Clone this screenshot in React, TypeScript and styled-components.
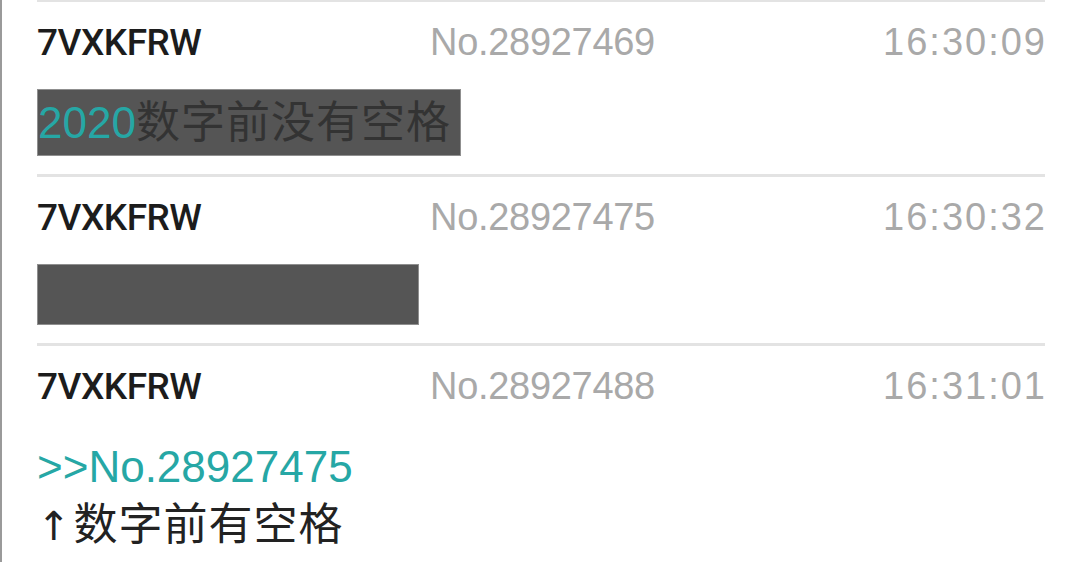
import React from "react";
import styled, { createGlobalStyle } from "styled-components";

const GlobalStyle = createGlobalStyle`
  html, body {
    margin: 0;
    padding: 0;
    background: #ffffff;
  }
  body {
    font-family: "Liberation Sans", "Noto Sans CJK SC", sans-serif;
    overflow: hidden;
  }
`;

type Segment = { text: string; link?: boolean; symbol?: boolean };

type PostData = {
  id: string;
  user: string;
  no: string;
  time: string;
  spoiler?: { segments: Segment[]; width?: number };
  lines?: Segment[][];
};

const posts: PostData[] = [
  {
    id: "1",
    user: "7VXKFRW",
    no: "No.28927469",
    time: "16:30:09",
    spoiler: {
      segments: [{ text: "2020", link: true }, { text: "数字前没有空格" }],
    },
  },
  {
    id: "2",
    user: "7VXKFRW",
    no: "No.28927475",
    time: "16:30:32",
    spoiler: { segments: [], width: 382 },
  },
  {
    id: "3",
    user: "7VXKFRW",
    no: "No.28927488",
    time: "16:31:01",
    lines: [
      [{ text: ">>No.28927475", link: true }],
      [{ text: "↑", symbol: true }, { text: "数字前有空格" }],
    ],
  },
];

const Page = styled.div`
  min-height: 100vh;
  box-sizing: border-box;
  border-left: 2px solid #9a9a9a;
  padding: 0 35px 0 35px;
  margin-top: -1px;
`;

const Post = styled.article`
  border-top: 3px solid #e3e3e3;
  padding-bottom: 18px;
`;

const Header = styled.header`
  display: grid;
  grid-template-columns: 393px 1fr auto;
  align-items: baseline;
  padding-top: 18px;
  height: 44px;
  line-height: 44px;
  font-size: 38px;
`;

const User = styled.span`
  font-family: "Roboto", "Liberation Sans", sans-serif;
  font-weight: 500;
  font-size: 37px;
  color: #1c1c1c;
  letter-spacing: -0.5px;
`;

const PostNo = styled.span`
  color: #a9a9a9;
  letter-spacing: -0.3px;
`;

const Time = styled.span`
  color: #a9a9a9;
  letter-spacing: 2px;
  margin-right: -2px;
`;

const Spoiler = styled.div<{ $width?: number }>`
  margin-top: 25px;
  box-sizing: border-box;
  width: ${(p) => (p.$width ? `${p.$width}px` : "fit-content")};
  min-height: 61px;
  padding-right: 9px;
  background: #555555;
  border: 1px solid #8f8f8f;
  font-size: 44px;
  line-height: 65px;
  color: #333333;
`;

const Body = styled.div`
  margin-top: 30px;
  font-size: 44px;
  color: #222222;
`;

const Line = styled.div`
  line-height: 58px;
`;

const Seg = styled.span<{ $link?: boolean; $symbol?: boolean }>`
  color: ${(p) => (p.$link ? "#26a7a5" : "inherit")};
  letter-spacing: ${(p) => (p.$link ? "0" : "1px")};
  font-family: ${(p) =>
    p.$symbol ? `"DejaVu Sans", sans-serif` : "inherit"};
  font-size: ${(p) => (p.$symbol ? "40px" : "inherit")};
  margin-right: ${(p) => (p.$symbol ? "2px" : "0")};
`;

const renderSegments = (segments: Segment[]) =>
  segments.map((s, i) => (
    <Seg key={i} $link={s.link} $symbol={s.symbol}>
      {s.text}
    </Seg>
  ));

const App = () => {
  return (
    <>
      <GlobalStyle />
      <Page>
        {posts.map((post) => (
          <Post key={post.id}>
            <Header>
              <User>{post.user}</User>
              <PostNo>{post.no}</PostNo>
              <Time>{post.time}</Time>
            </Header>
            {post.spoiler && (
              <Spoiler $width={post.spoiler.width}>
                {renderSegments(post.spoiler.segments)}
              </Spoiler>
            )}
            {post.lines && (
              <Body>
                {post.lines.map((line, i) => (
                  <Line key={i}>{renderSegments(line)}</Line>
                ))}
              </Body>
            )}
          </Post>
        ))}
      </Page>
    </>
  );
};

export default App;
